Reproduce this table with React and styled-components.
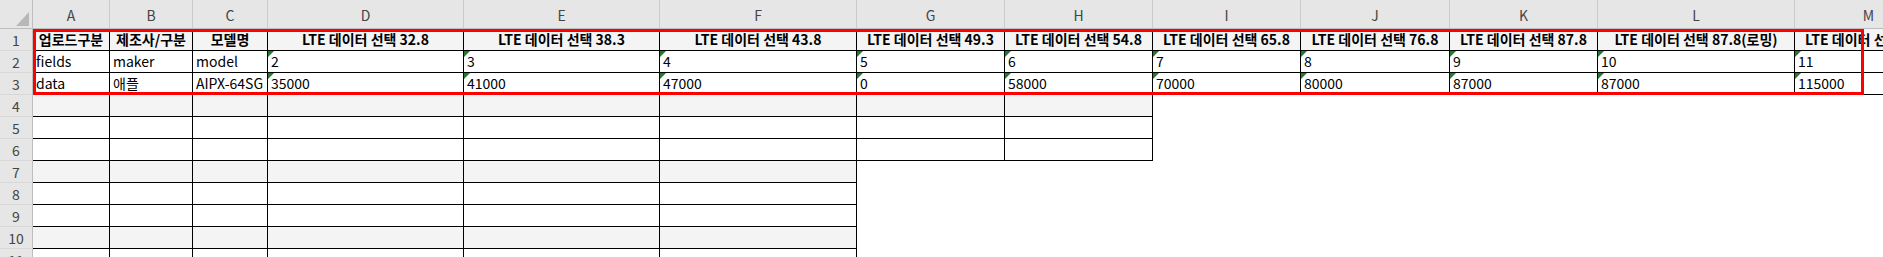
import React from 'react';
import styled, { createGlobalStyle } from 'styled-components';

const GlobalStyle = createGlobalStyle`
  html, body {
    margin: 0;
    padding: 0;
    background: #fff;
    overflow: hidden;
  }
  body {
    font-family: "Noto Sans CJK KR", "Noto Sans", sans-serif;
  }
`;

const COLUMNS = [
  { key: 'A', width: 77 },
  { key: 'B', width: 83 },
  { key: 'C', width: 75 },
  { key: 'D', width: 196 },
  { key: 'E', width: 196 },
  { key: 'F', width: 197 },
  { key: 'G', width: 148 },
  { key: 'H', width: 148 },
  { key: 'I', width: 148 },
  { key: 'J', width: 149 },
  { key: 'K', width: 148 },
  { key: 'L', width: 197 },
  { key: 'M', width: 148 },
];

const HEADERS = [
  '업로드구분', '제조사/구분', '모델명',
  'LTE 데이터 선택 32.8', 'LTE 데이터 선택 38.3', 'LTE 데이터 선택 43.8',
  'LTE 데이터 선택 49.3', 'LTE 데이터 선택 54.8', 'LTE 데이터 선택 65.8',
  'LTE 데이터 선택 76.8', 'LTE 데이터 선택 87.8', 'LTE 데이터 선택 87.8(로밍)',
  'LTE 데이터 선택 98.8',
];

const FIELDS = ['fields', 'maker', 'model', '2', '3', '4', '5', '6', '7', '8', '9', '10', '11'];
const DATA = ['data', '애플', 'AIPX-64SG', '35000', '41000', '47000', '0', '58000', '70000', '80000', '87000', '87000', '115000'];

// how many columns carry borders on each row (1-based row numbers)
const borderedCols = (row) => {
  if (row <= 3) return 13;
  if (row <= 6) return 8;
  return 6;
};

const Sheet = styled.div`
  position: relative;
  display: grid;
  grid-template-columns: 33px ${(p) => p.$cols};
  grid-template-rows: 29px;
  grid-auto-rows: 22px;
  width: max-content;
`;

const Corner = styled.div`
  position: relative;
  box-sizing: border-box;
  background: #e6e6e6;
  border-right: 1px solid #bdbdbd;
  border-bottom: 1px solid #bdbdbd;
`;

const CornerMark = styled.svg`
  position: absolute;
  left: 16px;
  top: 12px;
`;

const ColHead = styled.div`
  box-sizing: border-box;
  display: flex;
  align-items: center;
  justify-content: center;
  padding-top: 2px;
  background: #e6e6e6;
  border-right: 1px solid #cbcbcb;
  border-bottom: 1px solid #bdbdbd;
  color: #444;
  font-size: 14px;
`;

const RowHead = styled.div`
  box-sizing: border-box;
  display: flex;
  align-items: center;
  justify-content: center;
  padding-top: 1px;
  background: #e6e6e6;
  border-right: 1px solid #bdbdbd;
  border-bottom: 1px solid #d8d8d8;
  color: #444;
  font-size: 14px;
`;

const Cell = styled.div`
  position: relative;
  box-sizing: border-box;
  overflow: hidden;
  white-space: nowrap;
  padding: 0 3px;
  font-size: 14px;
  line-height: 21px;
  color: #000;
  font-weight: ${(p) => (p.$head ? 700 : 400)};
  text-align: ${(p) => (p.$head ? 'center' : 'left')};
  background: ${(p) => (p.$bordered && p.$shade ? '#f4f4f4' : '#fff')};
  border-right: 1px solid ${(p) => (p.$bordered ? '#000' : 'transparent')};
  border-bottom: 1px solid ${(p) => (p.$bordered ? '#000' : 'transparent')};
`;

const Flag = styled.span`
  position: absolute;
  top: 0;
  left: 0;
  width: 0;
  height: 0;
  border-top: 6px solid #217a2d;
  border-right: 6px solid transparent;
`;

const Highlight = styled.div`
  position: absolute;
  left: 33px;
  top: 29px;
  width: 1831px;
  height: 66px;
  box-sizing: border-box;
  border: 3px solid #ff0000;
  pointer-events: none;
`;

const rowContent = (row, col) => {
  if (row === 1) return HEADERS[col];
  if (row === 2) return FIELDS[col];
  if (row === 3) return DATA[col];
  return '';
};

const App = () => {
  const rows = Array.from({ length: 11 }, (_, i) => i + 1);
  const cols = COLUMNS.map((c) => `${c.width}px`).join(' ');

  return (
    <>
      <GlobalStyle />
      <Sheet $cols={cols}>
        <Corner>
          <CornerMark width="13" height="14" viewBox="0 0 13 14">
            <polygon points="13,0 13,14 0,14" fill="#b8b8b8" />
          </CornerMark>
        </Corner>
        {COLUMNS.map((c) => (
          <ColHead key={c.key}>{c.key}</ColHead>
        ))}
        {rows.map((row) => (
          <React.Fragment key={row}>
            <RowHead>{row}</RowHead>
            {COLUMNS.map((c, i) => {
              const bordered = i < borderedCols(row);
              return (
                <Cell
                  key={c.key}
                  $head={row === 1}
                  $bordered={bordered}
                  $shade={row % 3 === 1}
                >
                  {(row === 2 || row === 3) && i >= 3 && <Flag />}
                  {rowContent(row, i)}
                </Cell>
              );
            })}
          </React.Fragment>
        ))}
        <Highlight />
      </Sheet>
    </>
  );
};

export default App;
